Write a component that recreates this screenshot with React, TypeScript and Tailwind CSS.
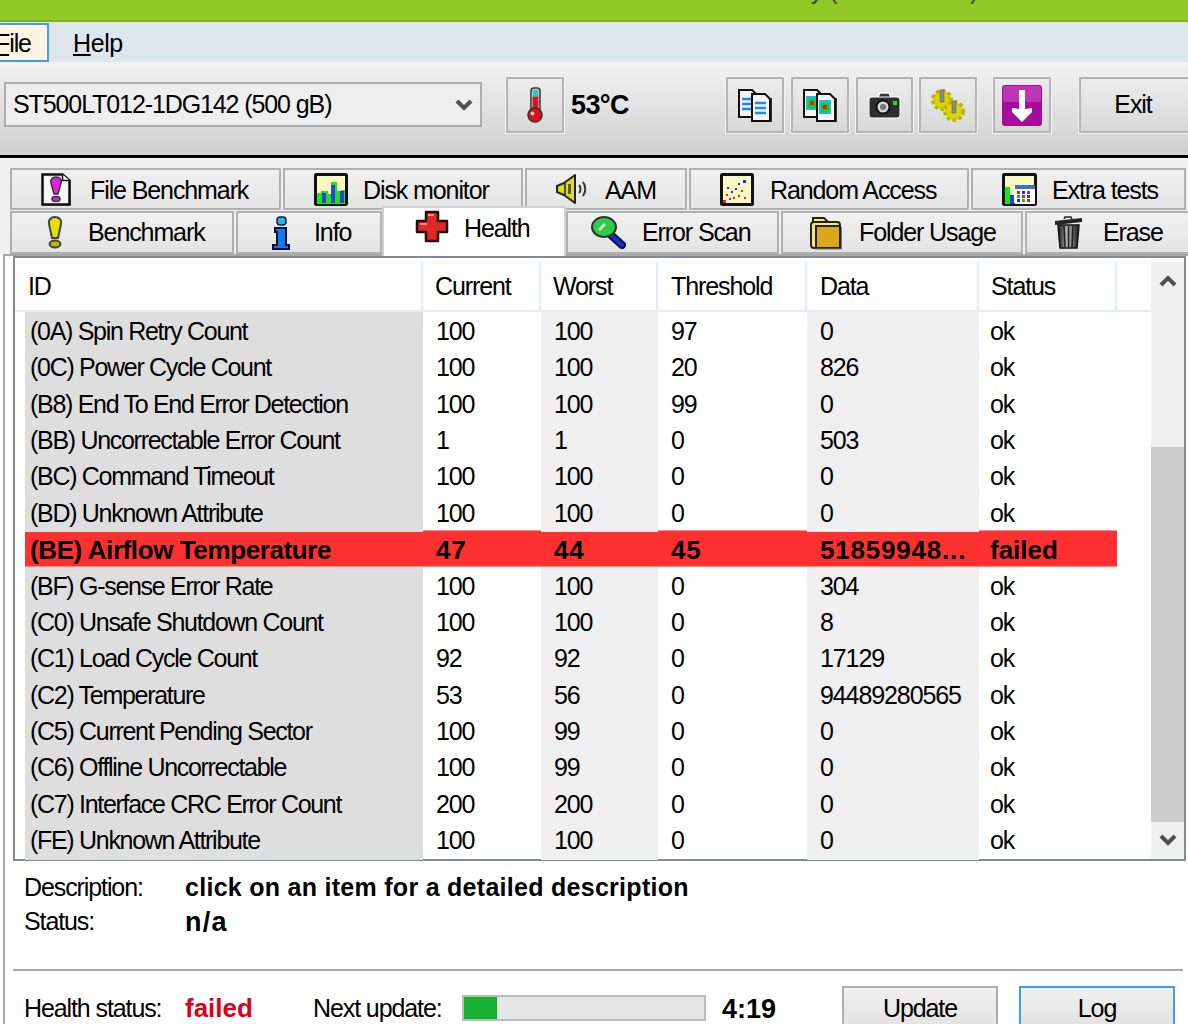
import React from "react";

const sans = "font-['Liberation_Sans',Arial,sans-serif]";

function Thermo() {
  return (
    <svg viewBox="0 0 20 36" preserveAspectRatio="none" className="w-[20px] h-[36px]">
      <rect x="6" y="1" width="9" height="26" rx="3" fill="#e8e8e8" stroke="#333" strokeWidth="1.5" />
      <rect x="7.5" y="2.5" width="6" height="7" fill="#3cc4c4" />
      <rect x="7.5" y="9.5" width="6" height="18" fill="#d8141c" />
      <circle cx="10" cy="28" r="7" fill="#d8141c" stroke="#333" strokeWidth="1.5" />
      <circle cx="7.5" cy="26.5" r="2" fill="#f8c0c0" />
    </svg>
  );
}

function BangDoc() {
  return (
    <svg viewBox="0 0 30 33" preserveAspectRatio="none" className="w-[30px] h-[33px]">
      <path d="M2 32h28V8" fill="none" stroke="#888" strokeWidth="1.5" />
      <path d="M1.5 1.5h20l7 6v24h-27z" fill="#f6f6f6" stroke="#111" strokeWidth="2.5" />
      <path d="M21.5 1.5v6h7" fill="#fff" stroke="#111" strokeWidth="1.5" />
      <path d="M15 4c4 0 6 3 5 6l-3 11h-4l-3-11c-1-3 1-6 5-6z" fill="#e020e0" stroke="#333" strokeWidth="1.5" />
      <ellipse cx="15" cy="26" rx="4" ry="2.5" fill="#e020e0" stroke="#333" strokeWidth="1.5" />
    </svg>
  );
}

function BarsChart() {
  return (
    <svg viewBox="0 0 34 33" preserveAspectRatio="none" className="w-[34px] h-[33px]">
      <rect x="1.5" y="1.5" width="31" height="30" rx="1" fill="#fbf8c0" stroke="#111" strokeWidth="3" />
      <path d="M3 20h4v-2h7v3h3V9h6v9h4v-1h4v14H3z" fill="#18e818" />
      <path d="M8 30V20h4v10zM17 30V12h4v18zM26 30V18h4v12z" fill="#3a3ae0" />
    </svg>
  );
}

function Speaker() {
  return (
    <svg viewBox="0 0 33 30" preserveAspectRatio="none" className="w-[33px] h-[30px]">
      <path d="M1 12l7-3 11-8v28l-11-8-7-3z" fill="#e4d81c" stroke="#222" strokeWidth="2" strokeLinejoin="round" />
      <path d="M9 9v12" stroke="#222" strokeWidth="1.5" />
      <rect x="12" y="10" width="3" height="10" fill="#555" />
      <path d="M23 11c2 2 2 6 0 8M27 8c3 4 3 10 0 14" fill="none" stroke="#333" strokeWidth="2" />
    </svg>
  );
}

function DotsChart() {
  return (
    <svg viewBox="0 0 34 33" preserveAspectRatio="none" className="w-[34px] h-[33px]">
      <rect x="1.5" y="1.5" width="31" height="30" rx="1" fill="#fbf8c8" stroke="#111" strokeWidth="3" />
      <g fill="#e82020">
        <rect x="3" y="27" width="3" height="3" />
        <rect x="6" y="21" width="2" height="2" />
        <rect x="13" y="24" width="2" height="2" />
        <rect x="18" y="22" width="2" height="2" />
        <rect x="24" y="24" width="2" height="2" />
        <rect x="21" y="17" width="2" height="2" />
        <rect x="9" y="25" width="2" height="2" />
      </g>
      <g fill="#2030e0">
        <rect x="7" y="14" width="2" height="2" />
        <rect x="11" y="18" width="2" height="2" />
        <rect x="18" y="10" width="2" height="2" />
        <rect x="23" y="7" width="3" height="3" />
        <rect x="15" y="15" width="2" height="2" />
      </g>
    </svg>
  );
}

function ExtraChart() {
  return (
    <svg viewBox="0 0 35 33" preserveAspectRatio="none" className="w-[35px] h-[33px]">
      <rect x="1.5" y="1.5" width="32" height="30" rx="1" fill="#fbf8c0" stroke="#111" strokeWidth="3" />
      <path d="M3 14h5v17H3z" fill="#18e818" />
      <path d="M8 22h4v9H8z" fill="#2b3fd8" />
      <rect x="13" y="12" width="20" height="19" fill="#fff" />
      <rect x="13" y="12" width="20" height="4" fill="#3a70c8" />
      <g fill="#e02020">
        <rect x="15" y="18" width="3" height="3" />
        <rect x="25" y="18" width="3" height="3" />
        <rect x="20" y="22" width="3" height="3" />
        <rect x="25" y="26" width="3" height="3" />
      </g>
      <g fill="#2030e0">
        <rect x="20" y="18" width="3" height="3" />
        <rect x="15" y="26" width="3" height="3" />
        <rect x="25" y="22" width="3" height="3" />
      </g>
      <g fill="#18c018">
        <rect x="15" y="22" width="3" height="3" />
        <rect x="20" y="26" width="3" height="3" />
      </g>
    </svg>
  );
}

function Bang() {
  return (
    <svg viewBox="0 0 16 33" preserveAspectRatio="none" className="w-[16px] h-[33px]">
      <path d="M8 1c4 0 7 3 6 7l-3 14H5L2 8C1 4 4 1 8 1z" fill="#e8e000" stroke="#444" strokeWidth="2" />
      <ellipse cx="8" cy="28" rx="5.5" ry="3.5" fill="#c0b800" stroke="#444" strokeWidth="2" />
    </svg>
  );
}

function InfoIcon() {
  return (
    <svg viewBox="0 0 18 34" preserveAspectRatio="none" className="w-[18px] h-[34px]">
      <rect x="5" y="1" width="9" height="8" rx="3" fill="#28b4f0" stroke="#123" strokeWidth="1.5" />
      <path d="M3 12h11v17h3v4H1v-4h4V16H3z" fill="#1478f0" stroke="#061030" strokeWidth="2" />
    </svg>
  );
}

function Cross() {
  return (
    <svg viewBox="0 0 34 33" preserveAspectRatio="none" className="w-[34px] h-[33px]">
      <path d="M11 2h12v9h9v11h-9v9H11v-9H2V11h9z" fill="#e02828" stroke="#2a0a0a" strokeWidth="2.5" strokeLinejoin="round" />
      <path d="M13 5h6M5 14h7" stroke="#f58a8a" strokeWidth="2" />
    </svg>
  );
}

function Magnifier() {
  return (
    <svg viewBox="0 0 35 33" preserveAspectRatio="none" className="w-[35px] h-[33px]">
      <path d="M20 19l11 10" stroke="#0a1440" strokeWidth="8" strokeLinecap="round" />
      <path d="M20 19l11 10" stroke="#1830d0" strokeWidth="4" strokeLinecap="round" />
      <ellipse cx="13" cy="11" rx="12" ry="10" fill="#2ccc48" stroke="#333" strokeWidth="2" />
      <path d="M8 14l6-6" stroke="#b8f8c0" strokeWidth="3" />
    </svg>
  );
}

function Folder() {
  return (
    <svg viewBox="0 0 32 35" preserveAspectRatio="none" className="w-[32px] h-[35px]">
      <path d="M3 9V3h11l4 4h9v4z" fill="#f4e890" stroke="#222" strokeWidth="2" />
      <rect x="1" y="7" width="29" height="26" rx="3" fill="#f6e67c" stroke="#222" strokeWidth="2" />
      <rect x="6" y="11" width="24" height="22" fill="#d8a818" stroke="#222" strokeWidth="2" />
      <path d="M31.5 12v22H5" fill="none" stroke="#777" strokeWidth="1" />
    </svg>
  );
}

function Trash() {
  return (
    <svg viewBox="0 0 31 33" preserveAspectRatio="none" className="w-[31px] h-[33px]">
      <defs>
        <linearGradient id="can" x1="0" x2="1" y1="0" y2="0">
          <stop offset="0" stopColor="#111" />
          <stop offset="0.45" stopColor="#bbb" />
          <stop offset="1" stopColor="#111" />
        </linearGradient>
      </defs>
      <path d="M2 5l27-3v4L2 9z" fill="#222" />
      <path d="M11 3l1-2h6l1 2" fill="none" stroke="#222" strokeWidth="1.5" />
      <path d="M5 9h21l-2 23H7z" fill="url(#can)" stroke="#111" strokeWidth="1.5" />
      <path d="M11 10l1 21M15.5 10v21M20 10l-1 21" stroke="#222" strokeWidth="1.5" />
    </svg>
  );
}

function CopyDocs({ pictures }: { pictures?: boolean }) {
  const Page = ({ x, y }: { x: number; y: number }) => (
    <g transform={`translate(${x} ${y})`}>
      <path d="M1 1h13l5 5v22H1z" fill="#f4f4f4" stroke="#111" strokeWidth="2" />
      {pictures ? (
        <>
          <rect x="3" y="7" width="12" height="14" fill="#22b8d8" />
          <rect x="5" y="10" width="8" height="9" fill="#22c822" />
          <rect x="7" y="12" width="4" height="4" fill="#e02020" />
        </>
      ) : (
        <path d="M4 10h11M4 15h11M4 20h11" stroke="#1e88f0" strokeWidth="2.5" />
      )}
    </g>
  );
  return (
    <svg viewBox="0 0 34 33" preserveAspectRatio="none" className="w-[34px] h-[33px]">
      <Page x={0} y={0} />
      <path d="M33.5 9v24H15" fill="none" stroke="#333" strokeWidth="1.5" />
      <Page x={13} y={4} />
    </svg>
  );
}

function Camera() {
  return (
    <svg viewBox="0 0 33 28" preserveAspectRatio="none" className="w-[33px] h-[28px]">
      <path d="M10 6l2-4h9l2 4" fill="#333" stroke="#fff" strokeWidth="1.5" />
      <rect x="1" y="6" width="31" height="21" rx="3" fill="#2e2e2e" stroke="#fff" strokeWidth="1" />
      <circle cx="15" cy="16" r="6.5" fill="#d8d8d8" stroke="#111" strokeWidth="2" />
      <circle cx="15" cy="16" r="3" fill="#777" />
      <rect x="25" y="10" width="4" height="4" fill="#22d838" />
    </svg>
  );
}

function Gear({ x, y }: { x: number; y: number }) {
  return (
    <g transform={`translate(${x} ${y})`}>
      <circle r="9" fill="#d8d000" stroke="#b8b400" strokeWidth="4" strokeDasharray="3.5 2.5" />
      <circle r="7.5" fill="#dcd600" />
      <rect x="-2" y="-10" width="4" height="12" fill="#8c8c8c" stroke="#555" strokeWidth="0.5" />
    </g>
  );
}

function Gears() {
  return (
    <svg viewBox="0 0 34 33" preserveAspectRatio="none" className="w-[34px] h-[33px]">
      <Gear x={11} y={11} />
      <Gear x={23} y={22} />
    </svg>
  );
}

function DownArrow() {
  return (
    <svg viewBox="0 0 40 41" preserveAspectRatio="none" className="w-[40px] h-[41px]">
      <rect x="0" y="0" width="40" height="41" rx="3" fill="#a80c9c" />
      <rect x="1" y="1" width="38" height="16" rx="2" fill="#c848c0" opacity="0.7" />
      <path d="M17 5h6v19l7-1v4L20 37 10 27v-4l7 1z" fill="#fff" />
    </svg>
  );
}

const tabsTop = [
  { label: "File Benchmark", icon: <BangDoc />, cls: "w-[271px] pl-[29px] gap-[19px]" },
  { label: "Disk monitor", icon: <BarsChart />, cls: "w-[240px] pl-[29px] gap-[15px]" },
  { label: "AAM", icon: <Speaker />, cls: "w-[162px] pl-[29px] gap-[16px]" },
  { label: "Random Access", icon: <DotsChart />, cls: "w-[280px] pl-[29px] gap-[16px]" },
  { label: "Extra tests", icon: <ExtraChart />, cls: "w-[215px] pl-[29px] gap-[15px]" },
];

const tabsBottom = [
  { label: "Benchmark", icon: <Bang />, cls: "w-[224px] mr-[2px] pl-[35px] gap-[25px]" },
  { label: "Info", icon: <InfoIcon />, cls: "w-[146px] pl-[34px] gap-[24px]" },
  { label: "Health", icon: <Cross />, cls: "", active: true },
  { label: "Error Scan", icon: <Magnifier />, cls: "w-[213px] mr-[2px] pl-[23px] gap-[16px]" },
  { label: "Folder Usage", icon: <Folder />, cls: "w-[242px] mr-[2px] pl-[27px] gap-[17px]" },
  { label: "Erase", icon: <Trash />, cls: "w-[170px] pl-[26px] gap-[19px]" },
];

const rows = [
  ["(0A) Spin Retry Count", "100", "100", "97", "0", "ok"],
  ["(0C) Power Cycle Count", "100", "100", "20", "826", "ok"],
  ["(B8) End To End Error Detection", "100", "100", "99", "0", "ok"],
  ["(BB) Uncorrectable Error Count", "1", "1", "0", "503", "ok"],
  ["(BC) Command Timeout", "100", "100", "0", "0", "ok"],
  ["(BD) Unknown Attribute", "100", "100", "0", "0", "ok"],
  ["(BE) Airflow Temperature", "47", "44", "45", "51859948...", "failed"],
  ["(BF) G-sense Error Rate", "100", "100", "0", "304", "ok"],
  ["(C0) Unsafe Shutdown Count", "100", "100", "0", "8", "ok"],
  ["(C1) Load Cycle Count", "92", "92", "0", "17129", "ok"],
  ["(C2) Temperature", "53", "56", "0", "94489280565", "ok"],
  ["(C5) Current Pending Sector", "100", "99", "0", "0", "ok"],
  ["(C6) Offline Uncorrectable", "100", "99", "0", "0", "ok"],
  ["(C7) Interface CRC Error Count", "200", "200", "0", "0", "ok"],
  ["(FE) Unknown Attribute", "100", "100", "0", "0", "ok"],
];

const columns = "grid grid-cols-[408px_118px_117px_149px_172px_138px]";

function HeaderCell({ label, cls }: { label: string; cls: string }) {
  return (
    <div className={`flex items-center pt-[2px] border-r-2 border-[#e3edf8] ${cls}`}>{label}</div>
  );
}

function ToolButton({ children, cls }: { children: React.ReactNode; cls: string }) {
  return (
    <div className={`shrink-0 h-[56px] flex items-center justify-center border-2 border-[#b4b4b4] outline outline-1 outline-[#f4f4f4] ${cls}`}>
      {children}
    </div>
  );
}

function Chevron({ up }: { up?: boolean }) {
  return (
    <svg viewBox="0 0 18 12" className="w-[18px] h-[12px]">
      <path d={up ? "M2 10l7-7 7 7" : "M2 2l7 7 7-7"} fill="none" stroke="#505050" strokeWidth="4" />
    </svg>
  );
}

export default function App() {
  return (
    <div className={`w-[1188px] h-[1024px] overflow-hidden bg-white text-black text-[25px] tracking-[-1.1px] ${sans}`}>
      {/* window title, only the descenders are left in the crop */}
      <div className="h-[22px] bg-[#90c926] border-b-2 border-[#7fb020] overflow-hidden flex justify-end pr-[210px]">
        <span className="-mt-[28px] text-[#444] whitespace-nowrap tracking-[-0.4px]">HD Tune Pro 5.60 - Hard Disk/SSD Utility (Trial Version)</span>
      </div>

      {/* menu */}
      <div className="h-[40px] bg-[#dde5ed] flex items-center">
        <div className="-ml-[10px] h-[39px] w-[59px] pl-[3px] flex items-center bg-[#fdf5e0] border-2 border-[#3f9cf0] shrink-0">
          <span className="mt-[3px]"><span className="underline">F</span>ile</span>
        </div>
        <span className="ml-[24px] mt-[3px] tracking-[-0.4px]"><span className="underline">H</span>elp</span>
      </div>

      {/* toolbar */}
      <div className="h-[93px] bg-gradient-to-b from-[#f3f3f3] to-[#cfcfcf] flex items-start pt-[15px] pl-[4px]">
        <div className="shrink-0 mt-[5px] w-[478px] h-[45px] border-2 border-[#adadad] bg-[#eeeeee] flex items-center justify-between pl-[7px] pr-[7px]">
          <span>ST500LT012-1DG142 (500 gB)</span>
          <Chevron />
        </div>
        <ToolButton cls="w-[58px] ml-[24px]"><Thermo /></ToolButton>
        <span className="shrink-0 w-[58px] ml-[7px] mt-[8px] font-bold text-[27px] tracking-[-0.6px]">53°C</span>
        <ToolButton cls="w-[58px] ml-[97px]"><CopyDocs /></ToolButton>
        <ToolButton cls="w-[58px] ml-[7px]"><CopyDocs pictures /></ToolButton>
        <ToolButton cls="w-[57px] ml-[7px]"><Camera /></ToolButton>
        <ToolButton cls="w-[58px] ml-[6px]"><Gears /></ToolButton>
        <ToolButton cls="w-[58px] ml-[16px]"><DownArrow /></ToolButton>
        <ToolButton cls="w-[130px] ml-[28px]">
          <span className="mr-[22px]">Exit</span>
        </ToolButton>
      </div>
      <div className="h-[4px] border-t-[3px] border-black bg-white" />

      {/* tabs, two rows */}
      <div className="bg-[#f0f0f0] h-[95px] pt-[9px] pl-[10px]">
        <div className="flex gap-[2px] h-[42px]">
          {tabsTop.map((tab) => (
            <div
              key={tab.label}
              className={`shrink-0 flex items-center border-2 border-[#b0b0b0] bg-gradient-to-b from-[#f0f0f0] to-[#e4e4e4] ${tab.cls}`}
            >
              {tab.icon}
              <span className="whitespace-nowrap mt-[3px]">{tab.label}</span>
            </div>
          ))}
        </div>
        <div className="flex h-[43px] mt-[1px]">
          {tabsBottom.map((tab) =>
            tab.active ? (
              <div
                key={tab.label}
                className="shrink-0 w-[184px] h-[50px] -mt-[5px] z-10 bg-white border-2 border-b-0 border-[#d0d0d0] flex items-start pl-[31px] pt-[2px] gap-[15px]"
              >
                {tab.icon}
                <span>{tab.label}</span>
              </div>
            ) : (
              <div
                key={tab.label}
                className={`shrink-0 flex items-center border-2 border-[#b0b0b0] bg-gradient-to-b from-[#f0f0f0] to-[#e4e4e4] ${tab.cls}`}
              >
                {tab.icon}
                <span className="whitespace-nowrap">{tab.label}</span>
              </div>
            )
          )}
        </div>
      </div>

      {/* tab page */}
      <div className="border-t-2 border-l-2 border-[#a8a8a8] ml-[3px] h-[770px] pl-[8px] bg-white">
        <div className="w-[1173px] h-[605px] border-2 border-[#7f8c98] flex">
          <div className="w-[1136px] shrink-0">
            <div className={`${columns} h-[50px] mt-[4px] border-b-2 border-[#e3edf8] bg-[#fdfdfd]`}>
              <HeaderCell label="ID" cls="pl-[13px]" />
              <HeaderCell label="Current" cls="pl-[12px]" />
              <HeaderCell label="Worst" cls="pl-[12px]" />
              <HeaderCell label="Threshold" cls="pl-[13px]" />
              <HeaderCell label="Data" cls="pl-[13px]" />
              <HeaderCell label="Status" cls="pl-[12px]" />
            </div>
            <div className="pl-[10px]">
              {rows.map((row) => {
                const failed = row[5] === "failed";
                return (
                  <div
                    key={row[0]}
                    className={`h-[36.36px] grid grid-cols-[398px_118px_117px_149px_172px_138px] items-stretch w-[1092px] ${
                      failed ? "bg-[#ff3030] font-bold text-[26px] border-y border-[#f09090]" : ""
                    }`}
                  >
                    {row.map((cell, i) => (
                      <div
                        key={i}
                        className={`flex items-center whitespace-nowrap ${
                          i === 0 ? "pl-[5px]" : i === 5 ? "pl-[11px]" : "pl-[13px]"
                        } ${
                          failed
                            ? i === 0
                              ? "tracking-[-0.4px]"
                              : i === 5
                              ? "tracking-[0px]"
                              : "tracking-[0.8px]"
                            : i === 0
                            ? "bg-[#dedede] pt-[1px] tracking-[-1.3px]"
                            : i === 2 || i === 4
                            ? "bg-[#efefef] pt-[1px]"
                            : "pt-[1px]"
                        }`}
                      >
                        {cell}
                      </div>
                    ))}
                  </div>
                );
              })}
            </div>
          </div>
          {/* scrollbar */}
          <div className="w-[33px] mt-[4px] bg-[#f0f0f0] flex flex-col items-center">
            <div className="h-[38px] flex items-center"><Chevron up /></div>
            <div className="h-[147px]" />
            <div className="w-full h-[375px] bg-[#cdcdcd]" />
            <div className="h-[36px] flex items-center"><Chevron /></div>
          </div>
        </div>

        {/* description */}
        <div className="pl-[11px] mt-[10px] h-[100px] border-b-2 border-[#a8a8a8] w-[1170px]">
          <div className="flex h-[34px] items-center">
            <span className="w-[161px]">Description:</span>
            <span className="font-bold tracking-[0.28px]">click on an item for a detailed description</span>
          </div>
          <div className="flex h-[34px] items-center">
            <span className="w-[161px]">Status:</span>
            <span className="font-bold text-[27px] tracking-[1.2px]">n/a</span>
          </div>
        </div>

        {/* status row */}
        <div className="flex items-start pl-[11px] mt-[15px]">
          <span className="w-[161px] mt-[4px]">Health status:</span>
          <span className="w-[128px] mt-[3px] font-bold text-[26px] tracking-[0px] text-[#d8001c]">failed</span>
          <span className="w-[149px] mt-[4px]">Next update:</span>
          <div className="mt-[9px] w-[244px] h-[26px] border-2 border-[#bcbcbc] bg-[#e6e6e6]">
            <div className="w-[33px] h-full bg-[#18b030]" />
          </div>
          <span className="ml-[16px] w-[120px] mt-[3px] font-bold text-[27px] tracking-[0px]">4:19</span>
          <div className="w-[156px] h-[50px] border-2 border-[#adadad] bg-gradient-to-b from-[#f0f0f0] to-[#e0e0e0] flex justify-center pt-[2px]">Update</div>
          <div className="ml-[21px] w-[156px] h-[50px] border-2 border-[#3f9cf0] bg-gradient-to-b from-[#f0f0f0] to-[#e0e0e0] flex justify-center pt-[2px]">Log</div>
        </div>
      </div>
    </div>
  );
}
